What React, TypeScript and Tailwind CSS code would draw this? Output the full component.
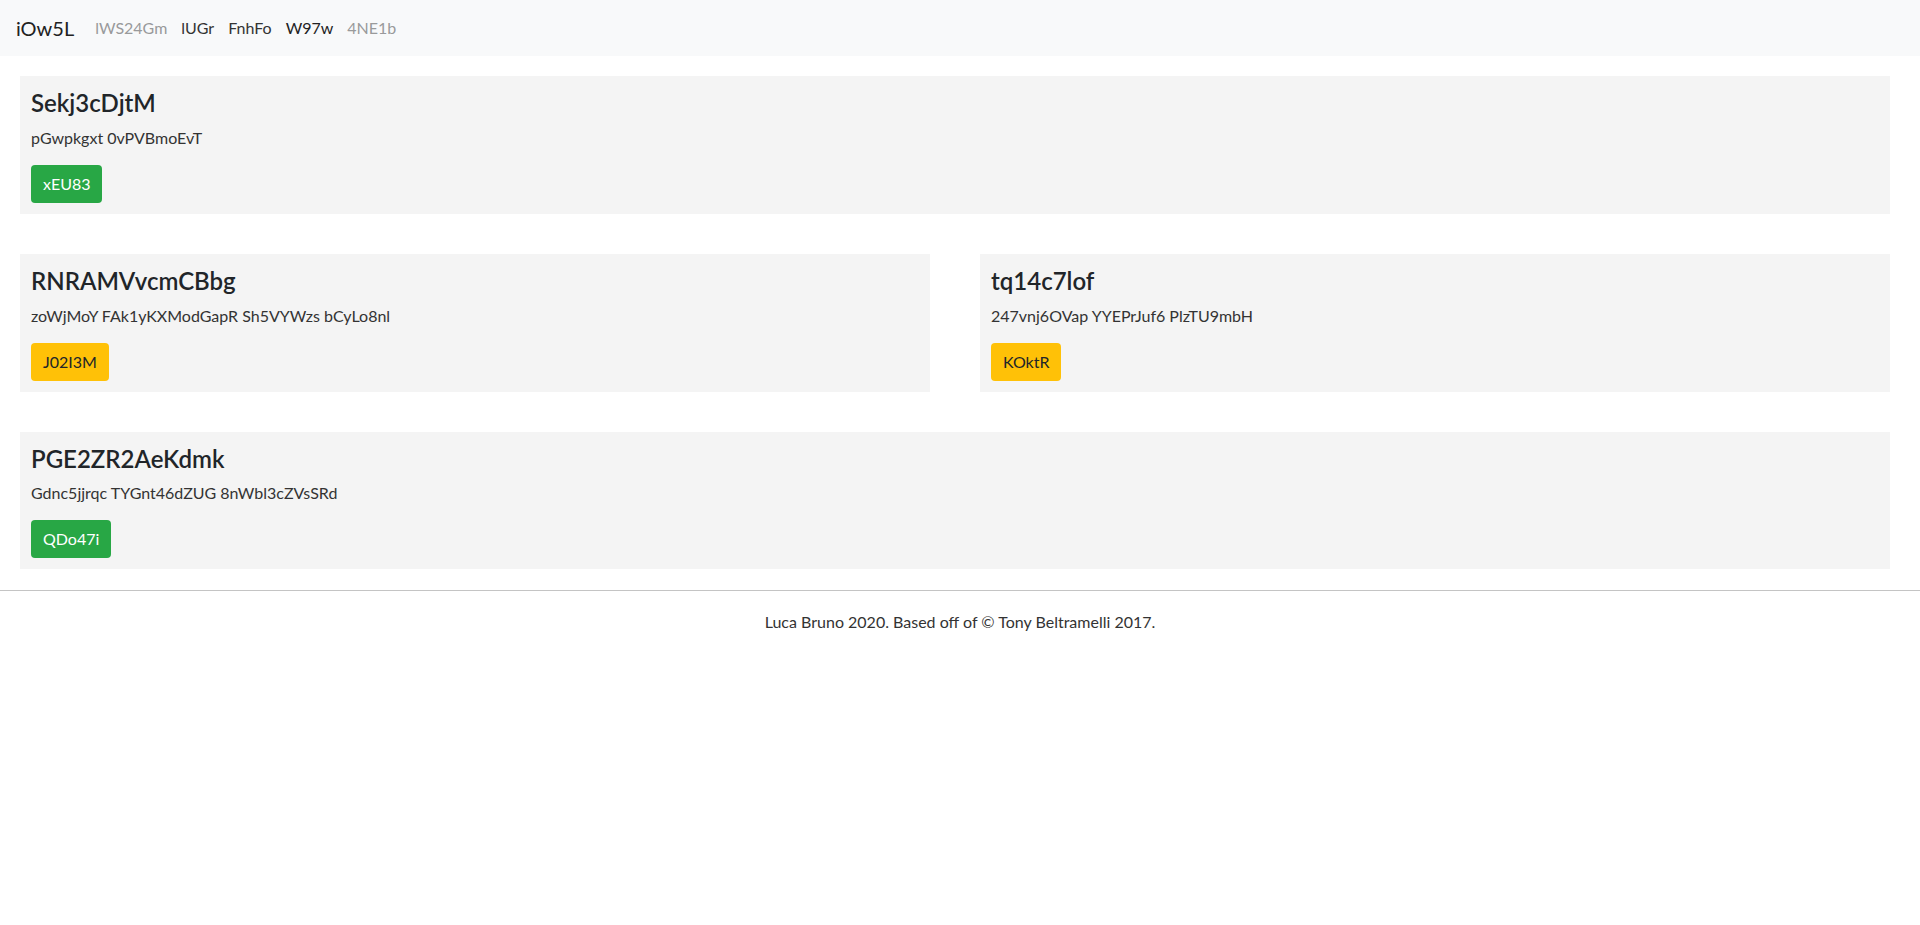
const font = { fontFamily: '"Lato", "Liberation Sans", sans-serif' };

type Card = {
    title: string;
    text: string;
    button: string;
    kind: "success" | "warning";
};

const btnClass = {
    success: "bg-[#28a745] text-white",
    warning: "bg-[#ffc107] text-[#212529]",
};

const CardBox = ({ card }: { card: Card }) => (
    <div className="bg-[#f4f4f4] px-[11px] pt-[13px] pb-[11px]">
        <h4 className="text-[24px] leading-[1.2] font-semibold text-[#212529] mb-2">
            {card.title}
        </h4>
        <p className="text-[16px] leading-6 text-[#333] mb-[15px]">{card.text}</p>
        <button
            className={`${btnClass[card.kind]} h-[38px] px-3 rounded text-[16px] leading-6`}
        >
            {card.button}
        </button>
    </div>
);

const App = () => {
    const links = [
        { label: "lWS24Gm", cls: "text-[#999a9b]" },
        { label: "lUGr", cls: "text-[#333]" },
        { label: "FnhFo", cls: "text-[#333]" },
        { label: "W97w", cls: "text-[#222]" },
        { label: "4NE1b", cls: "text-[#999a9b]" },
    ];

    return (
        <div className="min-h-screen bg-white text-[#212529]" style={font}>
            <nav className="h-14 bg-[#f8f9fa] flex items-center px-4">
                <div className="text-[20px] mr-[14px] text-[#222]">iOw5L</div>
                <div className="flex">
                    {links.map((l) => (
                        <a key={l.label} href="#" className={`px-[7px] text-[16px] ${l.cls}`}>
                            {l.label}
                        </a>
                    ))}
                </div>
            </nav>

            <main className="pl-5 pr-[30px] pt-5 flex flex-col gap-10">
                <CardBox
                    card={{
                        title: "Sekj3cDjtM",
                        text: "pGwpkgxt 0vPVBmoEvT",
                        button: "xEU83",
                        kind: "success",
                    }}
                />
                <div className="grid grid-cols-2 gap-[50px]">
                    <CardBox
                        card={{
                            title: "RNRAMVvcmCBbg",
                            text: "zoWjMoY FAk1yKXModGapR Sh5VYWzs bCyLo8nl",
                            button: "J02I3M",
                            kind: "warning",
                        }}
                    />
                    <CardBox
                        card={{
                            title: "tq14c7lof",
                            text: "247vnj6OVap YYEPrJuf6 PlzTU9mbH",
                            button: "KOktR",
                            kind: "warning",
                        }}
                    />
                </div>
                <CardBox
                    card={{
                        title: "PGE2ZR2AeKdmk",
                        text: "Gdnc5jjrqc TYGnt46dZUG 8nWbl3cZVsSRd",
                        button: "QDo47i",
                        kind: "success",
                    }}
                />
            </main>

            <hr className="mt-[21px] border-t border-[#c4c4c4]" />
            <footer className="pt-[19px] text-center text-[16px] leading-6 text-[#333]">
                Luca Bruno 2020. Based off of © Tony Beltramelli 2017.
            </footer>
        </div>
    );
};

export default App;
